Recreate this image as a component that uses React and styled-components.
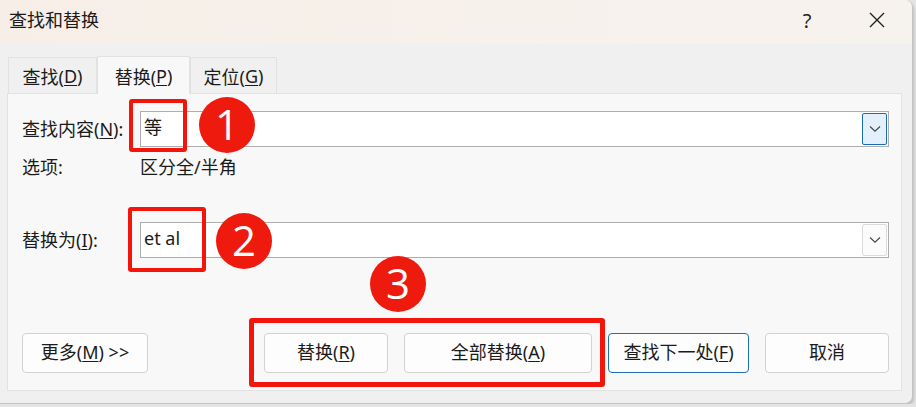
import React from 'react';
import styled, { createGlobalStyle } from 'styled-components';

const GlobalStyle = createGlobalStyle`
  body{
    margin: 0;
    background: #e4e4e4;
    font-family: "Noto Sans", "Noto Sans CJK SC", sans-serif;
    color: #1b1b1b;
  }
`;

const Window = styled.div`
  position: relative;
  width: 912px;
  height: 403px;
  display: flex;
  flex-direction: column;
  background: #f0f0f0;
  border-right: 1px solid #c4c4c4;
  border-bottom: 1px solid #c4c4c4;
  border-radius: 0 8px 8px 0;
  overflow: hidden;
  box-shadow: 1px 2px 3px rgba(0, 0, 0, 0.18);
`;

const TitleBar = styled.div`
  height: 44px;
  flex-shrink: 0;
  display: flex;
  align-items: center;
  padding-left: 9px;
  background: linear-gradient(90deg, #f6eee7 0%, #f7f1eb 50%, #f6f2ee 100%);
`;

const Title = styled.div`
  flex: 1;
  font-size: 18px;
  line-height: 24px;
  margin-top: -4px;
`;

const TitleButton = styled.div`
  width: 70px;
  height: 44px;
  display: flex;
  align-items: center;
  justify-content: center;
  font-size: 20px;
  font-family: "Noto Sans", sans-serif;
  margin-top: -4px;
  color: #222;
`;

const Body = styled.div`
  flex: 1;
  display: flex;
  flex-direction: column;
  padding: 11px 10px 12px 7px;
`;

const TabStrip = styled.div`
  display: flex;
  align-items: flex-end;
  height: 38px;
  padding-left: 1px;
`;

const Tab = styled.div`
  width: ${p => p.w}px;
  height: ${p => (p.active ? 38 : 36)}px;
  box-sizing: border-box;
  display: flex;
  align-items: center;
  justify-content: center;
  font-size: 18px;
  background: ${p => (p.active ? '#f8f8f8' : '#f0f0f0')};
  border: 1px solid #e2e2e2;
  border-bottom: none;
  margin-bottom: ${p => (p.active ? -1 : 0)}px;
  position: relative;
  z-index: ${p => (p.active ? 1 : 0)};
`;

const Panel = styled.div`
  flex: 1;
  display: flex;
  flex-direction: column;
  background: #f8f8f8;
  border: 1px solid #e2e2e2;
  padding: 17px 12px 17px 14px;
`;

const FieldRow = styled.div`
  display: flex;
  align-items: center;
  height: 36px;
  margin-top: ${p => p.mt || 0}px;
`;

const Label = styled.div`
  width: 118px;
  flex-shrink: 0;
  font-size: 18px;
  line-height: 24px;
`;

const Combo = styled.div`
  flex: 1;
  height: 36px;
  box-sizing: border-box;
  display: flex;
  align-items: center;
  background: #fff;
  border: 1px solid #adadad;
  padding: 0 1px 0 3px;
`;

const ComboText = styled.div`
  flex: 1;
  font-size: 18px;
  line-height: 24px;
  padding-bottom: 4px;
`;

const DropButton = styled.div`
  width: 25px;
  height: 32px;
  box-sizing: border-box;
  display: flex;
  align-items: center;
  justify-content: center;
  border: 1px solid ${p => (p.focused ? '#1c6cb4' : '#dadada')};
  border-radius: 2px;
  background: ${p => (p.focused ? '#e3f0fb' : '#fbfbfb')};
`;

const OptionsRow = styled.div`
  display: flex;
  margin-top: 8px;
  font-size: 18px;
  line-height: 24px;
`;

const ButtonRow = styled.div`
  display: flex;
  margin-top: auto;
  gap: 16px;
`;

const Spacer = styled.div`
  flex: 1;
`;

const Button = styled.div`
  width: ${p => p.w}px;
  height: 40px;
  box-sizing: border-box;
  display: flex;
  align-items: center;
  justify-content: center;
  background: #fdfdfd;
  border: 1px solid ${p => (p.primary ? '#1f6fb8' : '#d2d2d2')};
  border-radius: 4px;
  font-size: 18px;
  line-height: 24px;
  padding-bottom: 2px;
`;

const U = styled.span`
  text-decoration: underline;
  text-underline-offset: 2px;
  text-decoration-thickness: 1px;
`;

const Mark = styled.div`
  position: absolute;
  left: ${p => p.x}px;
  top: ${p => p.y}px;
  width: ${p => p.w}px;
  height: ${p => p.h}px;
  box-sizing: border-box;
  border: ${p => p.t || 4}px solid #f2150b;
  border-radius: 3px;
  pointer-events: none;
`;

const Badge = styled.div`
  position: absolute;
  left: ${p => p.x}px;
  top: ${p => p.y}px;
  width: 56px;
  height: 56px;
  border-radius: 50%;
  background: #ee1a0d;
  color: #fff;
  display: flex;
  align-items: center;
  justify-content: center;
  font-family: "Open Sans", "Noto Sans", sans-serif;
  font-size: 42px;
  line-height: 1;
  padding-bottom: 2px;
  box-sizing: border-box;
`;

const Chevron = () => (
  <svg width="12" height="8" viewBox="0 0 12 8">
    <path d="M1 1.5 L6 6.2 L11 1.5" fill="none" stroke="#444" strokeWidth="1.1" />
  </svg>
);

const CloseIcon = () => (
  <svg width="16" height="16" viewBox="0 0 16 16">
    <path d="M1 1 L15 15 M15 1 L1 15" stroke="#222" strokeWidth="1.4" />
  </svg>
);

export default function App() {
  return (
    <>
      <GlobalStyle />
      <Window>
        <TitleBar>
          <Title>查找和替换</Title>
          <TitleButton>?</TitleButton>
          <TitleButton><CloseIcon /></TitleButton>
        </TitleBar>
        <Body>
          <TabStrip>
            <Tab w={89}>查找(<U>D</U>)</Tab>
            <Tab w={93} active>替换(<U>P</U>)</Tab>
            <Tab w={87}>定位(<U>G</U>)</Tab>
          </TabStrip>
          <Panel>
            <FieldRow>
              <Label>查找内容(<U>N</U>):</Label>
              <Combo>
                <ComboText>等</ComboText>
                <DropButton focused><Chevron /></DropButton>
              </Combo>
            </FieldRow>
            <OptionsRow>
              <Label>选项:</Label>
              <div>区分全/半角</div>
            </OptionsRow>
            <FieldRow mt={43}>
              <Label>替换为(<U>I</U>):</Label>
              <Combo>
                <ComboText>et al</ComboText>
                <DropButton><Chevron /></DropButton>
              </Combo>
            </FieldRow>
            <ButtonRow>
              <Button w={126}>更多(<U>M</U>) &gt;&gt;</Button>
              <Spacer />
              <Button w={124}>替换(<U>R</U>)</Button>
              <Button w={188}>全部替换(<U>A</U>)</Button>
              <Button w={141} primary>查找下一处(<U>F</U>)</Button>
              <Button w={124}>取消</Button>
            </ButtonRow>
          </Panel>
        </Body>

        <Mark x={129} y={99} w={58} h={53} />
        <Mark x={128} y={207} w={78} h={65} />
        <Mark x={249} y={318} w={356} h={69} t={5} />
        <Badge x={199} y={97}>1</Badge>
        <Badge x={216} y={213}>2</Badge>
        <Badge x={370} y={256}>3</Badge>
      </Window>
    </>
  );
}
